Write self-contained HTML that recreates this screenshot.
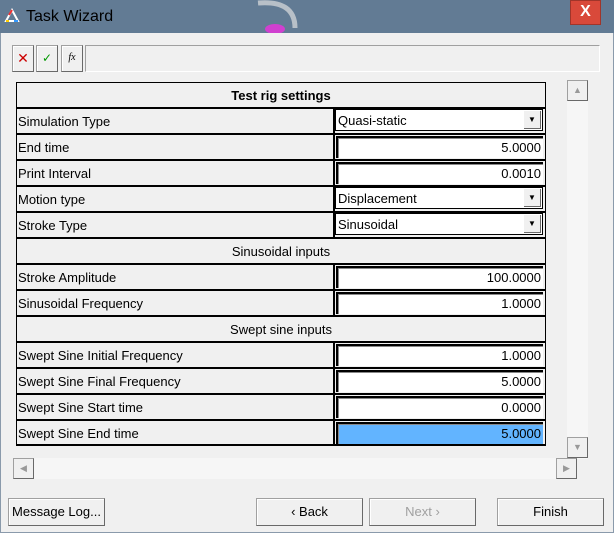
<!DOCTYPE html><html><head><style>
body{margin:0;width:614px;height:533px;background:#f0f0f0;position:relative;overflow:hidden;font-family:"Liberation Sans",sans-serif;font-size:13px;color:#000}
div{position:absolute;box-sizing:border-box}
.tb{left:0;top:0;width:614px;height:33px;background:#627b94}
.btn{background:#f0f0f0;border:1px solid #a0a0a0;border-right-color:#696969;border-bottom-color:#696969;box-shadow:inset 1px 1px 0 #fff;text-align:center}
.line{background:#000;height:2px;left:16px;width:530px}
.lab{left:18px;height:24px;line-height:26px;white-space:nowrap}
.inp{left:336px;width:207px;height:22px;background:#fff;border-left:2px solid #000;border-top:2px solid #000;box-shadow:inset 1px 1px 0 #888;text-align:right;padding-right:2px;line-height:20px}
.cmb{left:335px;width:208px;height:22px;background:#fff;border:1px solid #000;line-height:21px;padding-left:2px}
.arr{right:1px;top:1px;width:17px;height:18px;background:#f0f0f0;border-right:1px solid #696969;border-bottom:1px solid #696969;font-size:8px;line-height:18px;text-align:center}
.sec{left:17px;width:528px;height:24px;line-height:26px;text-align:center}
.sb{background:#f0f0f0;border:1px solid #a0a0a0;border-right-color:#696969;border-bottom-color:#696969;color:#999;font-size:9px;text-align:center;line-height:19px}
</style></head><body>
<div class="tb"></div>
<div style="left:4px;top:8px;width:16px;height:16px"><svg width="16" height="16"><path d="M8 2 L14 13 L2 13 Z" fill="none" stroke="#fff" stroke-width="2"/><path d="M8 2 L5 7" stroke="#e33" stroke-width="2"/><path d="M14 13 L10 13" stroke="#39f" stroke-width="2"/><path d="M2 13 L5 13" stroke="#fc0" stroke-width="2"/></svg></div>
<div style="left:26px;top:8px;font-size:16px;color:#000">Task Wizard</div>
<div style="left:250px;top:0;width:60px;height:33px;"><svg width="60" height="33"><path d="M8 3 Q45 0 45 28" stroke="#b8c0c8" stroke-width="5" fill="none"/><ellipse cx="25" cy="29" rx="10" ry="5" fill="#d040d0"/></svg></div>
<div style="left:570px;top:0;width:31px;height:25px;background:#d9493a;border:1px solid #a0352a;color:#fff;font-weight:bold;font-size:16px;text-align:center;line-height:22px">X</div>
<div style="left:0;top:33px;width:1px;height:500px;background:#8a9aab"></div>
<div style="left:613px;top:33px;width:1px;height:500px;background:#8a9aab"></div>
<div style="left:0;top:532px;width:614px;height:1px;background:#8a9aab"></div>

<div class="btn" style="left:12px;top:45px;width:22px;height:27px;color:#c00;font-size:14px;line-height:24px">✕</div>
<div class="btn" style="left:36px;top:45px;width:22px;height:27px;color:#090;font-size:12px;line-height:24px">✓</div>
<div class="btn" style="left:61px;top:45px;width:22px;height:27px;font-size:10px;font-style:italic;line-height:24px;font-family:'Liberation Serif',serif">fx</div>
<div style="left:85px;top:45px;width:515px;height:27px;border:1px solid #a0a0a0;border-right-color:#fff;border-bottom-color:#fff"></div>

<div style="left:16px;top:82px;width:530px;height:364px;border:1px solid #000;border-bottom:2px solid #000"></div>
<div class="sec" style="top:83px;font-weight:bold">Test rig settings</div>
<div class="line" style="top:107px"></div>
<div style="left:333px;top:107px;width:2px;height:130px;background:#000"></div>
<div style="left:333px;top:263px;width:2px;height:52px;background:#000"></div>
<div style="left:333px;top:341px;width:2px;height:104px;background:#000"></div>

<div class="lab" style="top:109px">Simulation Type</div><div class="cmb" style="top:109px">Quasi-static<div class="arr">▼</div></div>
<div class="line" style="top:133px"></div>
<div class="lab" style="top:135px">End time</div><div class="inp" style="top:136px">5.0000</div>
<div class="line" style="top:159px"></div>
<div class="lab" style="top:161px">Print Interval</div><div class="inp" style="top:162px">0.0010</div>
<div class="line" style="top:185px"></div>
<div class="lab" style="top:187px">Motion type</div><div class="cmb" style="top:187px">Displacement<div class="arr">▼</div></div>
<div class="line" style="top:211px"></div>
<div class="lab" style="top:213px">Stroke Type</div><div class="cmb" style="top:213px">Sinusoidal<div class="arr">▼</div></div>
<div class="line" style="top:237px"></div>
<div class="sec" style="top:239px">Sinusoidal inputs</div>
<div class="line" style="top:263px"></div>
<div class="lab" style="top:265px">Stroke Amplitude</div><div class="inp" style="top:266px">100.0000</div>
<div class="line" style="top:289px"></div>
<div class="lab" style="top:291px">Sinusoidal Frequency</div><div class="inp" style="top:292px">1.0000</div>
<div class="line" style="top:315px"></div>
<div class="sec" style="top:317px">Swept sine inputs</div>
<div class="line" style="top:341px"></div>
<div class="lab" style="top:343px">Swept Sine Initial Frequency</div><div class="inp" style="top:344px">1.0000</div>
<div class="line" style="top:367px"></div>
<div class="lab" style="top:369px">Swept Sine Final Frequency</div><div class="inp" style="top:370px">5.0000</div>
<div class="line" style="top:393px"></div>
<div class="lab" style="top:395px">Swept Sine Start time</div><div class="inp" style="top:396px">0.0000</div>
<div class="line" style="top:419px"></div>
<div class="lab" style="top:421px">Swept Sine End time</div><div class="inp" style="top:422px;background:#62b4ff">5.0000</div>

<div style="left:567px;top:80px;width:21px;height:379px;background:#f6f6f6"></div>
<div class="sb" style="left:567px;top:80px;width:21px;height:21px">▲</div>
<div class="sb" style="left:567px;top:437px;width:21px;height:21px">▼</div>
<div style="left:13px;top:458px;width:564px;height:21px;background:#f6f6f6"></div>
<div class="sb" style="left:13px;top:458px;width:21px;height:21px">◀</div>
<div class="sb" style="left:556px;top:458px;width:21px;height:21px">▶</div>

<div class="btn" style="left:8px;top:498px;width:97px;height:28px;line-height:26px">Message Log...</div>
<div class="btn" style="left:256px;top:498px;width:107px;height:28px;line-height:26px">‹ Back</div>
<div class="btn" style="left:369px;top:498px;width:107px;height:28px;line-height:26px;color:#a0a0a0">Next ›</div>
<div class="btn" style="left:497px;top:498px;width:107px;height:28px;line-height:26px">Finish</div>
</body></html>
